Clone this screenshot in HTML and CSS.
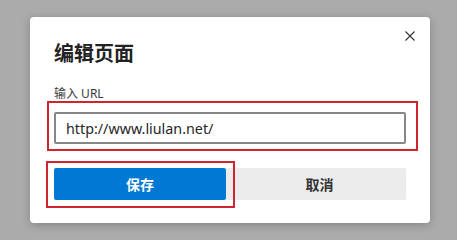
FILE: index.html
```html
<!DOCTYPE html>
<html lang="zh-CN">
<head>
<meta charset="utf-8">
<title>编辑页面</title>
<link rel="stylesheet" href="styles.css">
</head>
<body>
<div class="dialog">
  <div class="header">
    <h1 class="title">编辑页面</h1>
    <button class="close" aria-label="关闭">
      <svg width="10" height="10" viewBox="0 0 10 10"><path d="M0.5 0.5 L9.5 9.5 M9.5 0.5 L0.5 9.5" stroke="#333" stroke-width="1.1" fill="none"/></svg>
    </button>
  </div>
  <label class="label" for="url">输入 URL</label>
  <input class="input" id="url" type="text" value="http://www.liulan.net/">
  <div class="actions">
    <button class="btn btn-primary">保存</button>
    <button class="btn btn-secondary">取消</button>
  </div>
</div>
<div class="mark mark-input"></div>
<div class="mark mark-save"></div>
</body>
</html>
```

FILE: styles.css
```css
html, body {
  margin: 0;
  padding: 0;
}
body {
  background: #ababab;
  width: 457px;
  height: 240px;
  overflow: hidden;
  padding-top: 17px;
  box-sizing: border-box;
  font-family: "Noto Sans", "Noto Sans CJK SC", sans-serif;
}
.dialog {
  margin-left: 30px;
  width: 400px;
  height: 206px;
  box-sizing: border-box;
  background: #fff;
  border-radius: 4px;
  box-shadow: 0 2px 10px rgba(0, 0, 0, 0.22);
  padding: 14px 24px 0 24px;
  display: flex;
  flex-direction: column;
}
.header {
  display: flex;
  justify-content: space-between;
  align-items: flex-start;
}
.title {
  margin: 8px 0 0 0;
  font-family: "Noto Sans CJK SC", sans-serif;
  font-size: 20px;
  line-height: 28px;
  font-weight: 700;
  color: #222;
}
.close {
  margin: 0 -9px 0 0;
  padding: 0;
  border: 0;
  background: none;
  width: 10px;
  height: 10px;
  display: block;
}
.close svg {
  display: block;
}
.label {
  margin-top: 19px;
  font-family: "Noto Sans", "Noto Sans CJK SC", sans-serif;
  font-size: 12px;
  line-height: 16px;
  color: #3a3a3a;
}
.input {
  margin: 10px 0 0 0;
  height: 32px;
  box-sizing: border-box;
  border: 2px solid #878787;
  border-radius: 2px;
  padding: 0 10px;
  font-family: "Noto Sans", sans-serif;
  font-size: 14.3px;
  color: #262626;
  outline: none;
  width: 352px;
}
.actions {
  margin-top: 24px;
  display: flex;
}
.btn {
  height: 32px;
  border: 0;
  border-radius: 2px;
  font-family: "Noto Sans CJK SC", sans-serif;
  font-size: 14px;
  font-weight: 700;
  padding: 0;
}
.btn-primary {
  width: 172px;
  background: #0078d4;
  color: #fff;
}
.btn-secondary {
  flex: 1;
  background: #ececec;
  color: #333;
  border-radius: 0 2px 2px 0;
  padding-left: 7px;
}
.mark {
  position: absolute;
  border: 2px solid #d0242e;
  box-sizing: border-box;
}
.mark-input {
  left: 47px;
  top: 101px;
  width: 371px;
  height: 50px;
}
.mark-save {
  left: 46px;
  top: 161px;
  width: 189px;
  height: 47px;
}
```
